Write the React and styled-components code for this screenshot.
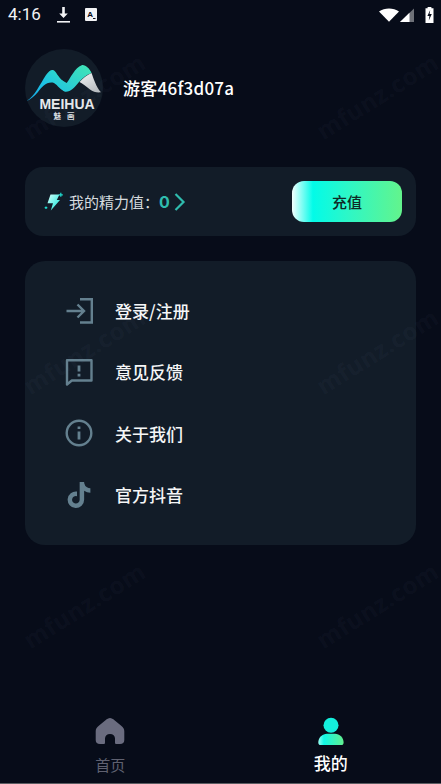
import React from 'react';
import styled, { createGlobalStyle } from 'styled-components';
import { FaTiktok } from 'react-icons/fa6';

const Global = createGlobalStyle`
  html, body { margin: 0; padding: 0; background: #070c19; }
  * { box-sizing: border-box; }
`;

const Page = styled.div`
  position: relative;
  width: 441px;
  height: 784px;
  overflow: hidden;
  display: flex;
  flex-direction: column;
  background: #070c19;
  color: #fff;
  font-family: "Noto Sans CJK SC", "Noto Sans", sans-serif;
`;

const StatusBar = styled.div`
  height: 30px;
  flex: none;
  display: flex;
  align-items: center;
  padding: 0 7.5px 1px 8px;
`;
const Time = styled.span`
  font: 400 17px/1 Roboto, sans-serif;
  color: #f2f3f5;
  width: 34px;
`;
const StatusLeft = styled.div`
  display: flex;
  align-items: center;
  gap: 14px;
  flex: 1;
`;
const StatusRight = styled.div`
  display: flex;
  align-items: center;
`;

const Main = styled.main`
  flex: 1;
  padding: 19px 25px 0;
  display: flex;
  flex-direction: column;
`;
const Profile = styled.section`
  display: flex;
  align-items: center;
  gap: 20px;
`;
const Avatar = styled.div`
  width: 78px;
  height: 78px;
  border-radius: 50%;
  background: #121c28;
  flex: none;
`;
const UserName = styled.div`
  font: 500 17px/1.2 "Noto Sans CJK SC", sans-serif;
  letter-spacing: 0.25px;
  color: #fff;
`;
const Card = styled.section`
  background: #121c28;
  border-radius: 20px;
`;
const EnergyCard = styled(Card)`
  margin-top: 40px;
  height: 69px;
  border-radius: 18px;
  padding: 0 14px 0 19px;
  display: flex;
  align-items: center;
`;
const EnergyLabel = styled.span`
  margin-left: 5px;
  font-size: 15px;
  line-height: 20px;
  color: #d6dbdf;
  width: 90px;
  white-space: nowrap;
`;
const EnergyValue = styled.span`
  font: 700 16px/20px "Inter", sans-serif;
  color: #2fbcae;
  width: 15px;
`;
const Spacer = styled.div`
  flex: 1;
`;
const Recharge = styled.button`
  width: 110px;
  height: 41px;
  border: 0;
  border-radius: 12px;
  background: linear-gradient(90deg, #f4fffe 0%, #02fbe8 19%, #2cf7c8 50%, #63f48c 100%);
  font: 500 15px/1 "Noto Sans CJK SC", sans-serif;
  color: #0f2a26;
  padding: 0;
`;
const MenuCard = styled(Card)`
  margin-top: 25px;
  height: 284px;
  padding: 19px 0 0 40px;
  display: flex;
  flex-direction: column;
`;
const MenuRow = styled.div`
  height: 61.3px;
  display: flex;
  align-items: center;
  gap: 22px;
  font: 500 17px/1 "Noto Sans CJK SC", sans-serif;
  color: #f5f6f7;
`;
const IconSlot = styled.div`
  width: 28px;
  height: 30px;
  display: flex;
  align-items: center;
  justify-content: center;
  color: #64808f;
  flex: none;
`;
const TabBar = styled.nav`
  height: 83px;
  flex: none;
  display: grid;
  grid-template-columns: 1fr 1fr;
`;
const Tab = styled.div`
  display: flex;
  flex-direction: column;
  align-items: center;
  gap: ${p => (p.$active ? '7px' : '9px')};
  padding-top: 16px;
  font-size: ${p => (p.$active ? '17px' : '15px')};
  line-height: 22px;
  font-weight: ${p => (p.$active ? 500 : 400)};
  color: ${p => (p.$active ? '#fff' : '#5f6170')};
`;
const BottomEdge = styled.div`
  position: absolute;
  left: 0;
  right: 0;
  bottom: 0;
  height: 1px;
  background: #5b5d62;
`;
const Watermark = styled.span`
  position: absolute;
  left: ${p => p.$x}px;
  top: ${p => p.$y}px;
  transform: rotate(-32deg);
  transform-origin: left bottom;
  font: 700 24px/1 "Open Sans", sans-serif;
  letter-spacing: 0.5px;
  color: rgba(150, 165, 200, 0.05);
  white-space: nowrap;
  pointer-events: none;
`;

const Logo = () => (
  <svg width="78" height="78" viewBox="0 0 78 78">
    <defs>
      <linearGradient id="mntBlue" x1="0" y1="1" x2="1" y2="0.2">
        <stop offset="0" stopColor="#14a6e4" />
        <stop offset="0.55" stopColor="#1ec3e4" />
        <stop offset="1" stopColor="#2fdcc8" />
      </linearGradient>
      <linearGradient id="mntGreen" x1="0" y1="1" x2="1" y2="0">
        <stop offset="0" stopColor="#20c4e0" />
        <stop offset="1" stopColor="#42e6b4" />
      </linearGradient>
      <linearGradient id="mntWhite" x1="0" y1="0" x2="0.6" y2="1">
        <stop offset="0" stopColor="#f4f6f6" />
        <stop offset="1" stopColor="#b9bec2" />
      </linearGradient>
    </defs>
    <path d="M1.700 52 C10 47 15 35 21 26 C23.500 22.500 26 20.500 28 21 C31 22 33 28 38 32 L42 42 C36 43 33 36 29 34 C22 32 17 38 13 43 C9 47.500 5 51 1.700 52 Z" fill="url(#mntBlue)" />
    <path d="M29 30 C33 28.500 36 30.500 41.700 34 C45.500 29 50 18.500 56.700 16.200 C60.500 15.500 64.500 19.500 66.500 24 C61.500 25.500 58 29 54 33 C50 38 45 43.500 40 42.700 C36 41.500 33 34 29 30 Z" fill="url(#mntGreen)" />
    <path d="M54.500 33 C58 29 62 26 66.500 24 C68.500 29 71 38 76 43.300 C72 43.800 68 43 65 40.500 C61 37.500 58 34.500 54.500 33 Z" fill="url(#mntWhite)" />
    <text x="42" y="59.500" textAnchor="middle" fontFamily="Liberation Sans, sans-serif" fontWeight="700" fontSize="14" fill="#e6e9ec">MEIHUA</text>
    <text x="42" y="69.500" textAnchor="middle" fontFamily="Noto Sans CJK SC, sans-serif" fontWeight="700" fontSize="7.500" letterSpacing="6" fill="#d8dce0">魅画</text>
  </svg>
);

const Download = () => (
  <svg width="15" height="18" viewBox="0 0 15 18">
    <path d="M6.200 1h2.600v6.500h3L7.500 12 3.200 7.500h3z" fill="#f2f3f5" />
    <rect x="1" y="15" width="13" height="1.600" fill="#f2f3f5" />
  </svg>
);
const AIcon = () => (
  <svg width="12" height="13" viewBox="0 0 12 13">
    <rect width="12" height="13" rx="1" fill="#f2f3f5" />
    <text x="5.200" y="8.600" textAnchor="middle" fontFamily="Liberation Sans, sans-serif" fontWeight="700" fontSize="8" fill="#070c19">A</text>
    <rect x="8" y="10" width="2.500" height="1" fill="#070c19" />
  </svg>
);
const Wifi = () => (
  <svg width="20" height="14" viewBox="0 0 20 14">
    <path d="M0 3.600 C5.500 -0.600 14.500 -0.600 20 3.600 L10 13.800 Z" fill="#fff" />
  </svg>
);
const Signal = () => (
  <svg width="16" height="14" viewBox="0 0 16 14">
    <path d="M1 14 L15 0.500 V14 Z" fill="#6e7178" />
    <path d="M1 14 L10.500 4.800 V14 Z" fill="#fff" />
  </svg>
);
const Battery = () => (
  <svg width="9" height="16" viewBox="0 0 9 16" style={{ marginLeft: 10 }}>
    <path d="M2.600 0h3.800v1.200H8.500V16H.5V1.200h2.100z" fill="#fff" />
    <path d="M5.200 3 2.400 9h2l-.6 4.400L6.800 7H4.600z" fill="#070c19" />
  </svg>
);

const Bolt = () => (
  <svg width="20" height="20" viewBox="0 0 20 20">
    <defs>
      <linearGradient id="bolt" x1="0" y1="0" x2="1" y2="1">
        <stop offset="0" stopColor="#d7fffb" />
        <stop offset="1" stopColor="#05e6d8" />
      </linearGradient>
    </defs>
    <path d="M6.500 2.500 H15.500 L12.800 8 H16 L6.800 18.500 L9 11.200 H3.500 Z" fill="url(#bolt)" />
    <path d="M16.800 0.800v4M14.800 2.800h4M2 14.400v2.600M0.700 15.700h2.600" stroke="#1fdccf" strokeWidth="1.200" />
  </svg>
);
const Chevron = () => (
  <svg width="12" height="18" viewBox="0 0 12 18">
    <path d="M1.500 1 9.500 9l-8 8" fill="none" stroke="#2fbcae" strokeWidth="2.200" />
  </svg>
);

const LoginIcon = () => (
  <svg width="28" height="28" viewBox="0 0 28 28" fill="none" stroke="currentColor" strokeWidth="2.400">
    <path d="M1.500 14H18.500M12.500 7.500 19 14l-6.500 6.500" />
    <path d="M15 2.200H26.800V25.500H15" />
  </svg>
);
const FeedbackIcon = () => (
  <svg width="28" height="28" viewBox="0 0 28 28" fill="none" stroke="currentColor" strokeWidth="2.400">
    <path d="M2 2.200H26.500V22.500H6.800L2 26.500Z" strokeLinejoin="round" />
    <path d="M14 7.500V13.500M14 15.800V18.500" strokeWidth="2.800" />
  </svg>
);
const InfoIcon = () => (
  <svg width="28" height="28" viewBox="0 0 28 28" fill="none" stroke="currentColor" strokeWidth="2.400">
    <circle cx="14" cy="14" r="12.300" />
    <path d="M14 12.500V20.500M14 7.500V10" strokeWidth="2.800" />
  </svg>
);

const HomeIcon = () => (
  <svg width="30" height="28" viewBox="0 0 30 28">
    <path d="M15 1 C16.500 1 18 2 19.500 3.200 L26.500 9 C28.500 10.700 29.300 12 29.300 14.500 V23 C29.300 25.800 27.800 27 25 27 H21.500 C20.500 27 20 26.500 20 25.500 V21.500 C20 18.800 18 17 15 17 C12 17 10 18.800 10 21.500 V25.500 C10 26.500 9.500 27 8.500 27 H5 C2.200 27 .7 25.800 .7 23 V14.500 C.7 12 1.500 10.700 3.500 9 L10.500 3.200 C12 2 13.500 1 15 1 Z" fill="#6a6c7f" />
  </svg>
);
const UserIcon = () => (
  <svg width="30" height="28" viewBox="0 -2 30 28">
    <defs>
      <linearGradient id="usr" x1="0" y1="0" x2="1" y2="0">
        <stop offset="0" stopColor="#9bfff2" />
        <stop offset="0.22" stopColor="#10f8e6" />
        <stop offset="1" stopColor="#62f08f" />
      </linearGradient>
    </defs>
    <circle cx="15" cy="6.200" r="7.500" fill="#14efdc" />
    <path d="M2.300 23.500 C2.300 18.500 6.500 14.700 11 14.700 H19 C23.500 14.700 27.600 18.500 27.600 23.500 C27.600 25.300 26.600 26.300 25 26.300 H5 C3.300 26.300 2.300 25.300 2.300 23.500 Z" fill="url(#usr)" />
  </svg>
);

const marks = [
  [32, 119], [325, 119], [32, 374], [325, 374], [32, 628], [325, 628],
];

export default function App() {
  return (
    <Page>
      <Global />
      <StatusBar>
        <StatusLeft>
          <Time>4:16</Time>
          <Download />
          <AIcon />
        </StatusLeft>
        <StatusRight>
          <Wifi />
          <Signal />
          <Battery />
        </StatusRight>
      </StatusBar>
      <Main>
        <Profile>
          <Avatar><Logo /></Avatar>
          <UserName>游客46f3d07a</UserName>
        </Profile>
        <EnergyCard>
          <Bolt />
          <EnergyLabel>我的精力值：</EnergyLabel>
          <EnergyValue>0</EnergyValue>
          <Chevron />
          <Spacer />
          <Recharge>充值</Recharge>
        </EnergyCard>
        <MenuCard>
          <MenuRow><IconSlot><LoginIcon /></IconSlot>登录/注册</MenuRow>
          <MenuRow><IconSlot><FeedbackIcon /></IconSlot>意见反馈</MenuRow>
          <MenuRow><IconSlot><InfoIcon /></IconSlot>关于我们</MenuRow>
          <MenuRow><IconSlot><FaTiktok size={26} /></IconSlot>官方抖音</MenuRow>
        </MenuCard>
      </Main>
      <TabBar>
        <Tab><HomeIcon />首页</Tab>
        <Tab $active><UserIcon />我的</Tab>
      </TabBar>
      <BottomEdge />
      {marks.map(([x, y]) => (
        <Watermark key={`${x}-${y}`} $x={x} $y={y}>mfunz.com</Watermark>
      ))}
    </Page>
  );
}
